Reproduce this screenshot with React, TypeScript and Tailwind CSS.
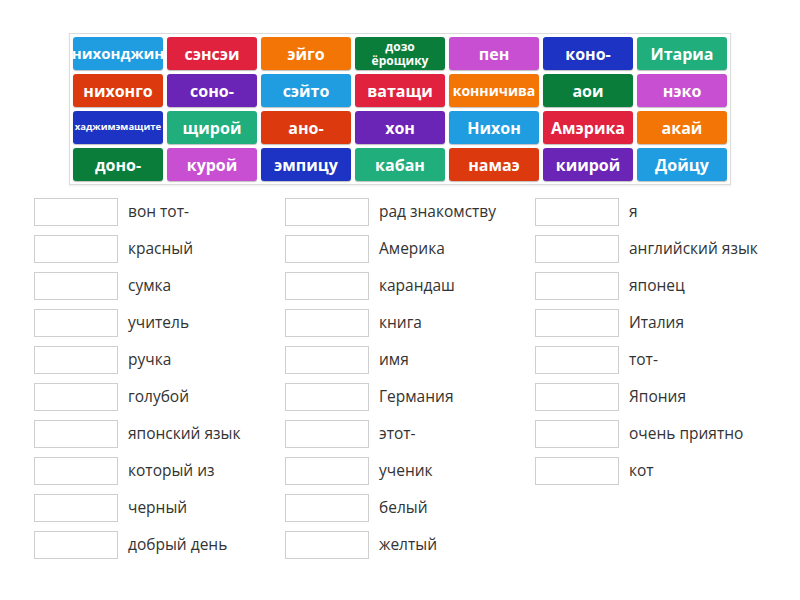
import React from "react";

const C = {
  blue: "bg-[#1f9de0]",
  red: "bg-[#e0223f]",
  orange: "bg-[#f27506]",
  green: "bg-[#0b7d3a]",
  pink: "bg-[#c84fd2]",
  navy: "bg-[#1c33c4]",
  teal: "bg-[#1fae7c]",
  rust: "bg-[#dc3a0e]",
  purple: "bg-[#6a25b6]",
};

type Tile = { t: string; c: string; s?: string };

const tiles: Tile[] = [
  { t: "нихонджин", c: C.blue, s: "text-[15px]" },
  { t: "сэнсэи", c: C.red },
  { t: "эйго", c: C.orange },
  { t: "дозо ёрощику", c: C.green, s: "text-[12px] leading-[14px]" },
  { t: "пен", c: C.pink },
  { t: "коно-", c: C.navy },
  { t: "Итариа", c: C.teal },
  { t: "нихонго", c: C.rust },
  { t: "соно-", c: C.purple },
  { t: "сэйто", c: C.blue },
  { t: "ватащи", c: C.red },
  { t: "конничива", c: C.orange, s: "text-[14px]" },
  { t: "аои", c: C.green },
  { t: "нэко", c: C.pink },
  { t: "хаджимэмащите", c: C.navy, s: "text-[9.5px]" },
  { t: "щирой", c: C.teal },
  { t: "ано-", c: C.rust },
  { t: "хон", c: C.purple },
  { t: "Нихон", c: C.blue },
  { t: "Амэрика", c: C.red },
  { t: "акай", c: C.orange },
  { t: "доно-", c: C.green },
  { t: "курой", c: C.pink },
  { t: "эмпицу", c: C.navy },
  { t: "кабан", c: C.teal },
  { t: "намаэ", c: C.rust },
  { t: "киирой", c: C.purple },
  { t: "Дойцу", c: C.blue },
];

const cols: string[][] = [
  [
    "вон тот-",
    "красный",
    "сумка",
    "учитель",
    "ручка",
    "голубой",
    "японский язык",
    "который из",
    "черный",
    "добрый день",
  ],
  [
    "рад знакомству",
    "Америка",
    "карандаш",
    "книга",
    "имя",
    "Германия",
    "этот-",
    "ученик",
    "белый",
    "желтый",
  ],
  [
    "я",
    "английский язык",
    "японец",
    "Италия",
    "тот-",
    "Япония",
    "очень приятно",
    "кот",
  ],
];

export default function App() {
  return (
    <div
      className="w-[800px] h-[600px] bg-white overflow-hidden"
      style={{ fontFamily: "'Open Sans', 'Noto Sans', sans-serif" }}
    >
      <div className="pt-[33px] pl-[69px]">
        <div className="w-[662px] border border-[#dcdcdc] p-[3px] grid grid-cols-[repeat(7,90px)] auto-rows-[33px] gap-[4px] shadow-[0_1px_2px_rgba(0,0,0,0.08)]">
          {tiles.map((x, i) => (
            <div
              key={i}
              className={`${x.c} rounded-[3px] flex items-center justify-center text-center text-white font-bold shadow-[0_1px_1px_rgba(0,0,0,0.25)] overflow-hidden whitespace-normal ${x.s ?? "text-[16px]"}`}
            >
              {x.t === "дозо ёрощику" ? (
                <span>
                  дозо
                  <br />
                  ёрощику
                </span>
              ) : (
                <span className="whitespace-nowrap">{x.t}</span>
              )}
            </div>
          ))}
        </div>
      </div>
      <div className="pl-[34px] pt-[13px] grid grid-cols-[251px_250px_250px]">
        {cols.map((col, ci) => (
          <div key={ci} className="flex flex-col gap-[9px]">
            {col.map((w, ri) => (
              <div key={ri} className="flex items-center h-[28px]">
                <div className="w-[84px] h-[28px] border border-[#cfcfcf] bg-white shrink-0" />
                <span className="ml-[10px] text-[15.5px] text-[#333333] whitespace-nowrap">
                  {w}
                </span>
              </div>
            ))}
          </div>
        ))}
      </div>
    </div>
  );
}
